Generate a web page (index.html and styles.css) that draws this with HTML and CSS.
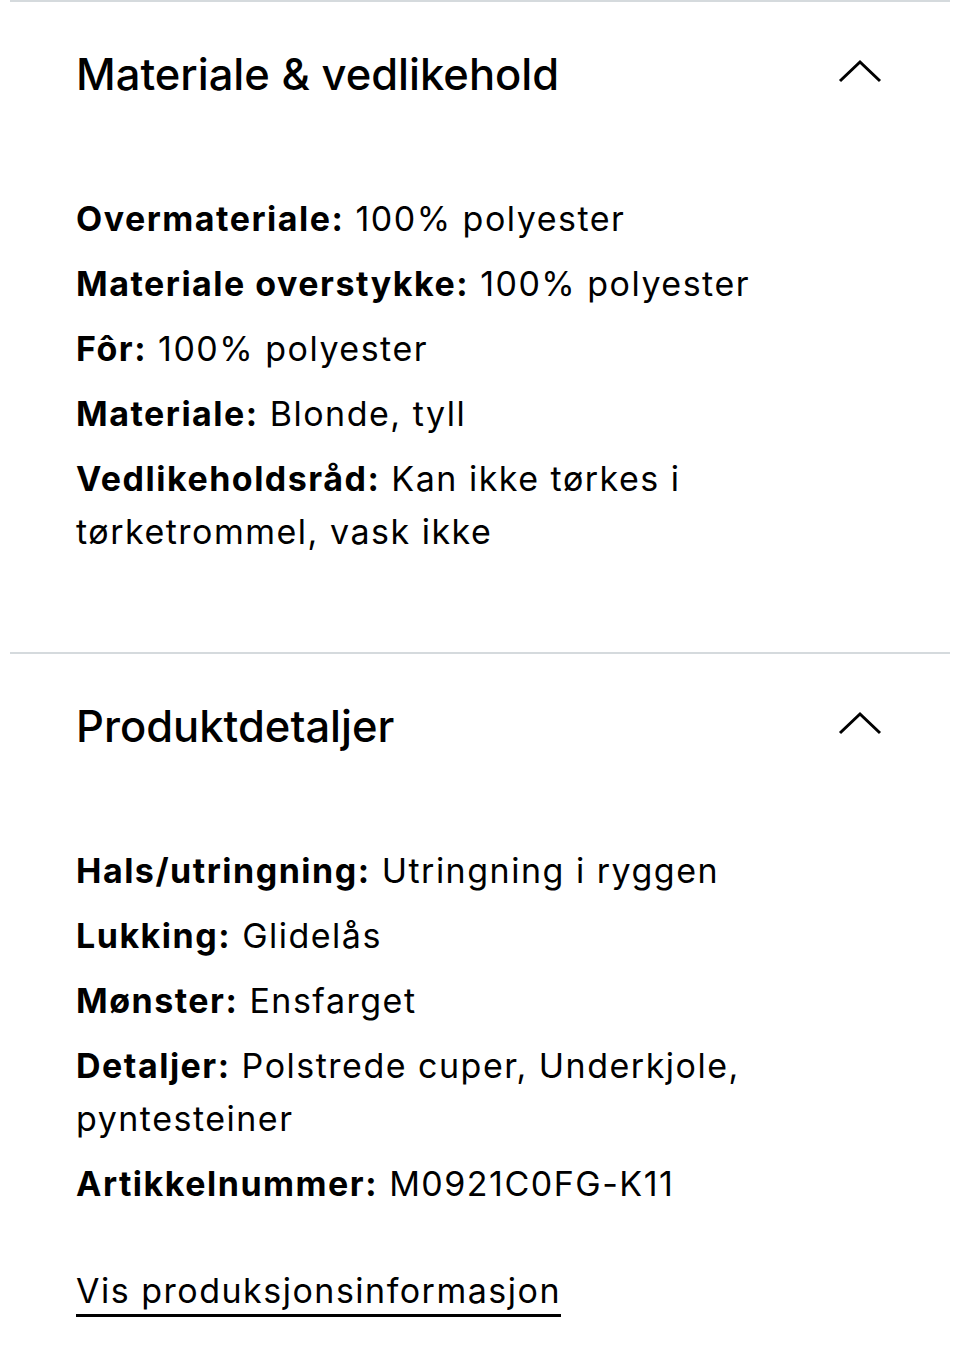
FILE: index.html
```html
<!DOCTYPE html>
<html lang="no">
<head>
<meta charset="utf-8">
<title>Produktinformasjon</title>
<link rel="stylesheet" href="styles.css">
</head>
<body>
<div class="page">
  <section class="panel">
    <div class="panel-head">
      <h2 class="panel-title">Materiale &amp; vedlikehold</h2>
      <svg class="chevron" width="44" height="24" viewBox="0 0 44 24" aria-hidden="true"><path d="M2 22 L22 3 L42 22" fill="none" stroke="#000" stroke-width="3"/></svg>
    </div>
    <ul class="spec-list">
      <li><b>Overmateriale:</b> 100% polyester</li>
      <li><b>Materiale overstykke:</b> 100% polyester</li>
      <li><b>Fôr:</b> 100% polyester</li>
      <li><b>Materiale:</b> Blonde, tyll</li>
      <li><b>Vedlikeholdsråd:</b> Kan ikke tørkes i tørketrommel, vask ikke</li>
    </ul>
  </section>
  <section class="panel">
    <div class="panel-head">
      <h2 class="panel-title">Produktdetaljer</h2>
      <svg class="chevron" width="44" height="24" viewBox="0 0 44 24" aria-hidden="true"><path d="M2 22 L22 3 L42 22" fill="none" stroke="#000" stroke-width="3"/></svg>
    </div>
    <ul class="spec-list">
      <li><b>Hals/utringning:</b> Utringning i ryggen</li>
      <li><b>Lukking:</b> Glidelås</li>
      <li><b>Mønster:</b> Ensfarget</li>
      <li><b>Detaljer:</b> Polstrede cuper, Underkjole, pyntesteiner</li>
      <li><b>Artikkelnummer:</b> M0921C0FG-K11</li>
    </ul>
    <a class="info-link" href="#">Vis produksjonsinformasjon</a>
  </section>
</div>
</body>
</html>
```
FILE: styles.css
```css
html, body {
  margin: 0;
  padding: 0;
  background: #fff;
}
body {
  font-family: Inter, "Liberation Sans", Arial, sans-serif;
  color: #000;
}
.page {
  padding: 0 10px;
}
.panel {
  border-top: 2px solid #d5dadd;
  padding: 0 66px 0 66px;
}
.panel-head {
  display: flex;
  align-items: center;
  justify-content: space-between;
  padding-top: 44px;
  height: 56px;
}
.panel-title {
  margin: 0;
  font-size: 43.5px;
  font-weight: 500;
  line-height: 56px;
  letter-spacing: 0;
}
.chevron {
  display: block;
  margin-right: 2px;
  margin-top: -6px;
}
.spec-list {
  list-style: none;
  margin: 0;
  padding: 90px 0 0 0;
  display: flex;
  flex-direction: column;
  gap: 12px;
  font-size: 34px;
  line-height: 53px;
  letter-spacing: 1.5px;
  max-width: 690px;
}
.spec-list li {
  margin: 0;
}
.spec-list b {
  font-weight: 700;
}
.panel:first-child .spec-list {
  padding-bottom: 94px;
}
.info-link {
  display: inline-block;
  margin-top: 54px;
  color: #000;
  font-size: 34px;
  line-height: 53px;
  letter-spacing: 1.5px;
  text-decoration: underline;
  text-decoration-thickness: 3px;
  text-underline-offset: 11px;
}
```
